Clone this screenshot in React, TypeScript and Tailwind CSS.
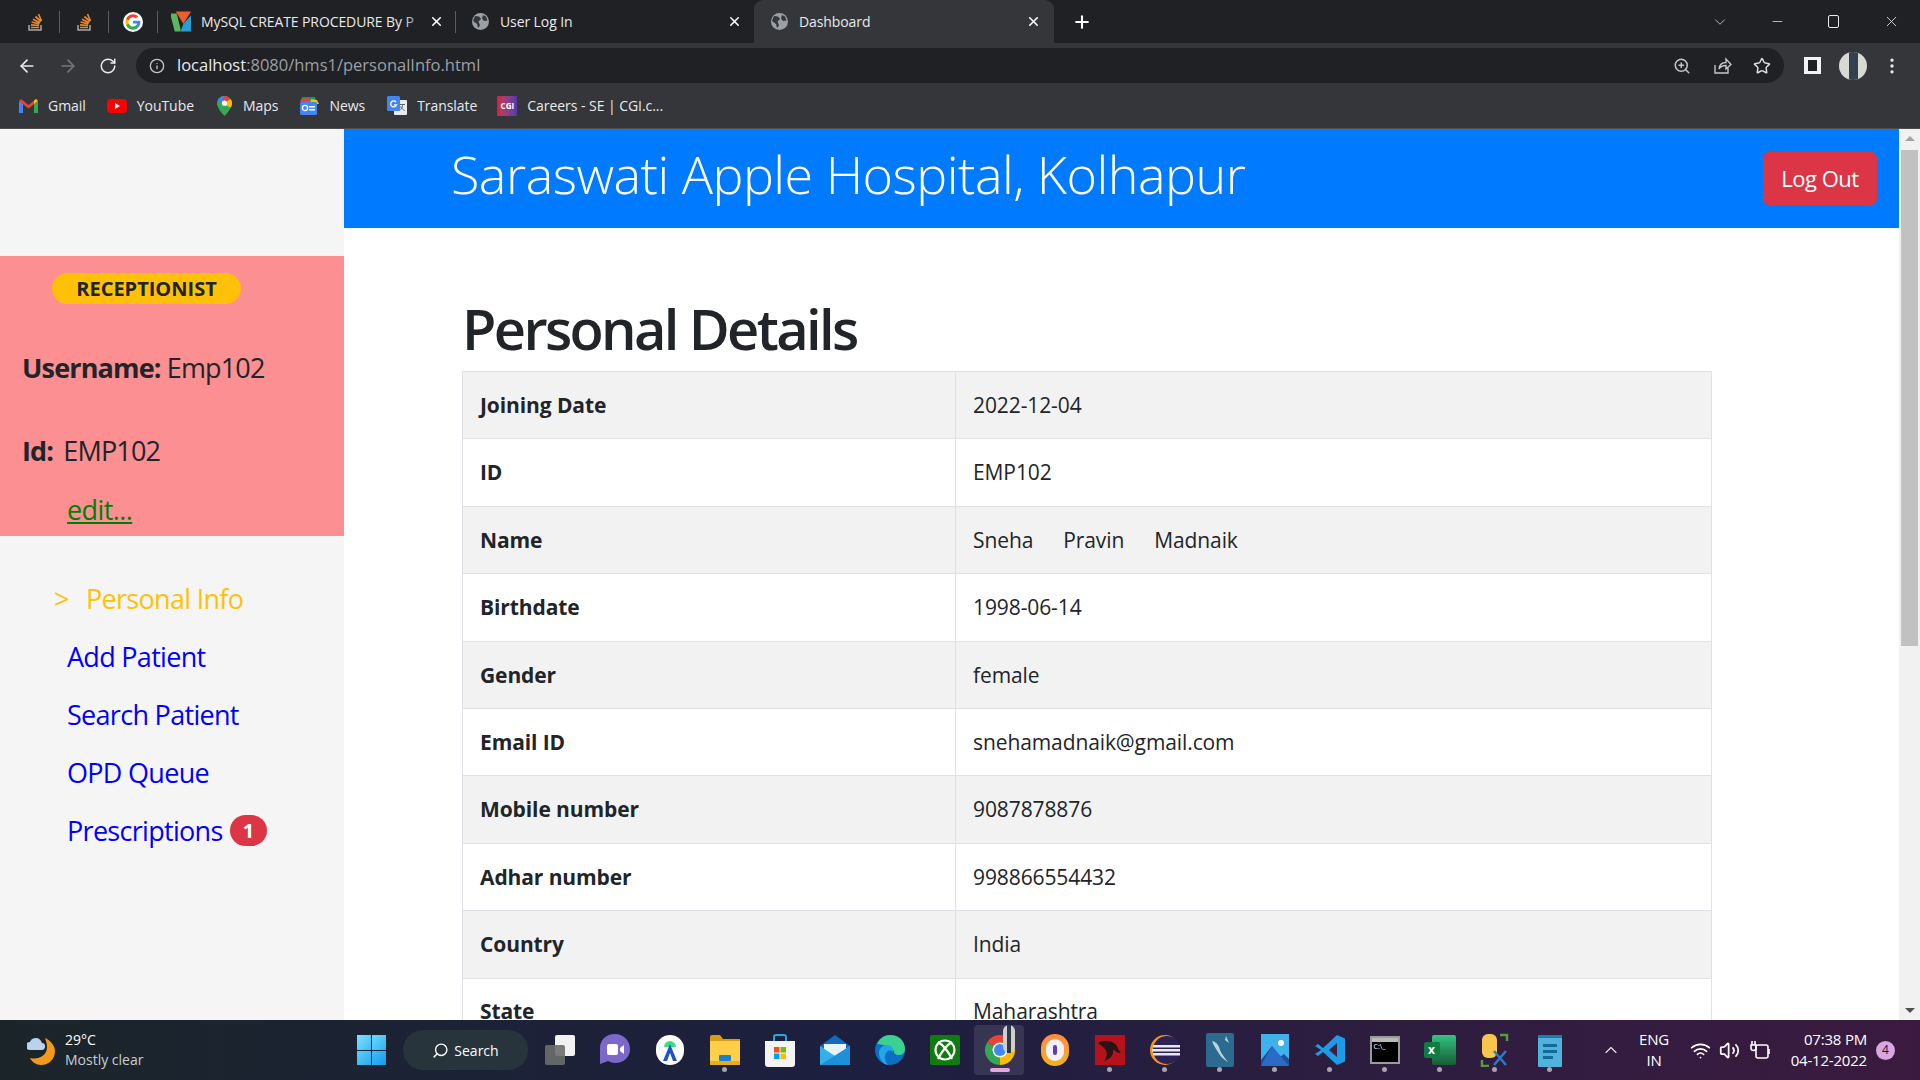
import {
  ArrowLeft,
  ArrowRight,
  ChevronDown,
  ChevronUp,
  Info,
  Minus,
  MoreVertical,
  Plus,
  RotateCw,
  Search,
  Star,
  Volume2,
  Wifi,
  X,
  ZoomIn,
} from "lucide-react";

const rows = [
  ["Joining Date", "2022-12-04"],
  ["ID", "EMP102"],
  ["Name", "Sneha|Pravin|Madnaik"],
  ["Birthdate", "1998-06-14"],
  ["Gender", "female"],
  ["Email ID", "snehamadnaik@gmail.com"],
  ["Mobile number", "9087878876"],
  ["Adhar number", "998866554432"],
  ["Country", "India"],
  ["State", "Maharashtra"],
];

function StackIcon() {
  return (
    <svg width="18" height="20" viewBox="0 0 18 20" fill="none">
      <path d="M3 13v5h12v-5" stroke="#a8a8a8" strokeWidth="1.5" />
      <path d="M5 15.5h8M5 12.8l8 .7M5.6 10l7.8 1.8M7 7.2l7 3.6M9.4 4.5l5.6 5M12.5 2l3 7" stroke="#e8872c" strokeWidth="1.7" />
    </svg>
  );
}

function GoogleIcon() {
  return (
    <div className="flex h-[20px] w-[20px] items-center justify-center rounded-full bg-white">
      <svg width="16" height="16" viewBox="0 0 24 24">
        <path fill="#4285F4" d="M23 12.3c0-.8-.1-1.600-.2-2.300H12v4.400h6.200c-.3 1.400-1.100 2.600-2.300 3.400v2.800h3.700c2.100-2 3.400-4.900 3.400-8.300z" />
        <path fill="#34A853" d="M12 23.500c3.100 0 5.700-1 7.600-2.800l-3.700-2.900c-1 .7-2.300 1.100-3.900 1.100-3 0-5.500-2-6.400-4.700H1.800v2.900c1.900 3.800 5.800 6.400 10.200 6.400z" />
        <path fill="#FBBC05" d="M5.600 14.200c-.5-1.400-.5-3 0-4.400V6.900H1.800c-1.600 3.200-1.600 7 0 10.200l3.800-2.900z" />
        <path fill="#EA4335" d="M12 5c1.700 0 3.200.6 4.400 1.700l3.300-3.300C17.700 1.600 15.100.5 12 .5 7.600.5 3.700 3.100 1.800 6.900l3.800 2.900C6.500 7 9 5 12 5z" />
      </svg>
    </div>
  );
}

function MysqlTutorialIcon() {
  return (
    <svg width="21" height="21" viewBox="0 0 21 21">
      <path d="M0 2h6l4 16v3H4L0 6z" fill="#5cb85c" />
      <path d="M5 0h16l-8 13z" fill="#f15a29" />
      <path d="M13 13l8-9v17H10z" fill="#2a9fd6" />
    </svg>
  );
}

function GlobeIcon() {
  return (
    <svg width="17" height="17" viewBox="0 0 17 17">
      <circle cx="8.500" cy="8.500" r="8.500" fill="#9aa0a6" />
      <path d="M3 3l4 .5L9 6 6.500 8.500l1.500 4-2 2.500-1-4L1 8zM11 2l3 1.500 1.500 4L12 8l-2-2.500z" fill="#35363a" />
    </svg>
  );
}

function Tab({ icon, title, width, close, fade }: { icon: React.ReactNode; title: string; width: string; close: string; fade?: boolean }) {
  return (
    <div className={`flex h-full items-center ${width}`}>
      <div className="flex w-[20px] shrink-0 justify-center">{icon}</div>
      <span className="relative ml-[10px] min-w-0 flex-1 overflow-hidden whitespace-nowrap text-[14px] tracking-[-0.1px] text-[#e8eaed]">
        {title}
        {fade && <span className="absolute inset-y-0 right-0 w-[26px] bg-gradient-to-r from-transparent to-[#202124]" />}
      </span>
      <X className={`shrink-0 text-white ${close}`} size={15} strokeWidth={2.5} />
    </div>
  );
}

function TabStrip() {
  return (
    <div className="flex h-[43px] items-center bg-[#202124]">
      <div className="ml-[26px] flex w-[18px] justify-center"><StackIcon /></div>
      <div className="ml-[15px] h-[22px] w-px bg-[#5a5c60]" />
      <div className="ml-[15px] flex w-[18px] justify-center"><StackIcon /></div>
      <div className="ml-[15px] h-[22px] w-px bg-[#5a5c60]" />
      <div className="ml-[14px] flex w-[20px] justify-center"><GoogleIcon /></div>
      <div className="ml-[14px] h-[22px] w-px bg-[#5a5c60]" />
      <div className="ml-[13px]">
        <Tab icon={<MysqlTutorialIcon />} title="MySQL CREATE PROCEDURE By P" width="w-[274px]" close="mr-[1px]" fade />
      </div>
      <div className="ml-[10px] h-[22px] w-px bg-[#5a5c60]" />
      <div className="ml-[14px]">
        <Tab icon={<GlobeIcon />} title="User Log In" width="w-[272px]" close="" />
      </div>
      <div className="ml-[12px] h-full self-end rounded-t-[9px] bg-[#35363a] pl-[15px] pr-[13px]">
        <Tab icon={<GlobeIcon />} title="Dashboard" width="w-[272px]" close="" />
      </div>
      <Plus className="ml-[18px] text-white" size={20} strokeWidth={2.5} />
      <ChevronDown className="ml-[619px] text-[#bdc1c6]" size={18} strokeWidth={1.2} />
      <Minus className="ml-[41px] text-[#e8eaed]" size={15} strokeWidth={1.2} />
      <div className="relative ml-[43px] h-[13px] w-[11px] rounded-[2px] border border-[#e8eaed]" />
      <X className="ml-[44px] text-[#e8eaed]" size={17} strokeWidth={1.2} />
    </div>
  );
}

function Toolbar() {
  return (
    <div className="flex h-[42px] items-center bg-[#35363a] pt-[3px]">
      <ArrowLeft className="ml-[17px] text-[#e8eaed]" size={20} />
      <ArrowRight className="ml-[21px] text-[#74777b]" size={20} />
      <RotateCw className="ml-[21px] text-[#e8eaed]" size={18} />
      <div className="ml-[19px] flex h-[35px] w-[1648px] items-center rounded-full bg-[#202124]">
        <Info className="ml-[13px] text-[#c4c7c5]" size={16} />
        <span className="ml-[12px] text-[16.5px] text-[#e8eaed]">localhost<span className="text-[#9aa0a6]">:8080/hms1/personalInfo.html</span></span>
        <ZoomIn className="ml-auto text-[#c4c7c5]" size={18} />
        <svg className="ml-[22px]" width="19" height="19" viewBox="0 0 19 19" fill="none" stroke="#c4c7c5" strokeWidth="1.400">
          <path d="M2 9v8h13v-5M6 13c.5-4 3-6.500 7-6.500V3l5 5.500-5 4.500V9.500c-3 0-5.500 1-7 3.500z" />
        </svg>
        <Star className="ml-[21px] mr-[13px] text-[#dadce0]" size={18} />
      </div>
      <div className="ml-[20px] h-[17px] w-[17px] border-[3px] border-x-[4px] border-[#f1f3f4] bg-[#202124]" />
      <div className="relative ml-[18px] h-[28px] w-[28px] overflow-hidden rounded-full bg-[#d9d9d4]">
        <div className="mx-auto h-full w-[9px] bg-[#33414e]" />
      </div>
      <MoreVertical className="ml-[15px] text-[#e8eaed]" size={20} />
    </div>
  );
}

function BookmarkIcon({ kind }: { kind: string }) {
  if (kind === "gmail") {
    return (
      <svg width="19" height="14" viewBox="0 0 19 14">
        <path d="M0 2v12h4V5z" fill="#4285f4" />
        <path d="M19 2v12h-4V5z" fill="#34a853" />
        <path d="M0 2l2-2 7.500 6L17 0l2 2-9.500 7.500z" fill="#ea4335" />
        <path d="M15 5l4-3-2-2-2 1.600z" fill="#fbbc04" />
      </svg>
    );
  }
  if (kind === "youtube") {
    return (
      <div className="flex h-[14px] w-[20px] items-center justify-center rounded-[4px] bg-[#ff0000]">
        <div className="ml-px h-0 w-0 border-y-[3px] border-l-[5px] border-y-transparent border-l-white" />
      </div>
    );
  }
  if (kind === "maps") {
    return (
      <svg width="15" height="20" viewBox="0 0 15 20">
        <path d="M7.500 0C3.400 0 0 3.300 0 7.400 0 12.500 7.500 20 7.500 20S15 12.500 15 7.400C15 3.300 11.600 0 7.500 0z" fill="#34a853" />
        <path d="M1 3.800C2.300 1.500 4.700 0 7.500 0l3 1-6 8z" fill="#4285f4" />
        <path d="M7.500 0c2.200 0 4.500 1 6 3L9 7 5.500 4z" fill="#ea4335" />
        <path d="M13.500 3c1 1.200 1.500 2.800 1.500 4.400 0 1.300-.5 2.800-1.300 4.200L6 8z" fill="#fbbc04" />
        <circle cx="7.500" cy="7.200" r="2.600" fill="#fff" />
      </svg>
    );
  }
  if (kind === "news") {
    return (
      <svg width="20" height="18" viewBox="0 0 20 18">
        <path d="M3 0h13l1 4H2z" fill="#0c9d58" />
        <path d="M2 2l8-1 2 4H1z" fill="#ea4335" />
        <path d="M12 2l6 1 2 4h-9z" fill="#fbbc04" />
        <rect x="1" y="5" width="17" height="13" rx="1.500" fill="#4285f4" />
        <rect x="10" y="9" width="6" height="1.500" fill="#fff" />
        <rect x="10" y="12" width="6" height="1.500" fill="#fff" />
        <circle cx="6" cy="11" r="2.600" fill="none" stroke="#fff" strokeWidth="1.300" />
      </svg>
    );
  }
  if (kind === "translate") {
    return (
      <svg width="20" height="20" viewBox="0 0 20 20">
        <rect x="7" y="4" width="13" height="15" rx="1" fill="#e8eaed" />
        <path d="M13 8.500h5M15.500 8v1.500c0 2-1.500 4-3.500 5M13.500 10.500c1 2 2.500 3 4 4" stroke="#5f6368" fill="none" />
        <rect x="0" y="0" width="13" height="15" rx="1.500" fill="#4285f4" />
        <path d="M9 6a3 3 0 1 0 .5 3H7" stroke="#fff" strokeWidth="1.300" fill="none" />
      </svg>
    );
  }
  return (
    <div className="flex h-[20px] w-[20px] items-center justify-center bg-gradient-to-r from-[#d81b3f] to-[#5236ab] text-[8px] font-bold text-white">CGI</div>
  );
}

function BookmarksBar() {
  const items = [
    ["gmail", "Gmail", "ml-[18px]", "w-[20px]"],
    ["youtube", "YouTube", "ml-[21px]", "w-[20px]"],
    ["maps", "Maps", "ml-[23px]", "w-[16px]"],
    ["news", "News", "ml-[21px]", "w-[20px]"],
    ["translate", "Translate", "ml-[22px]", "w-[20px]"],
    ["cgi", "Careers - SE | CGI.c...", "ml-[20px]", "w-[20px]"],
  ];
  return (
    <div className="flex h-[44px] items-center border-b border-[#4b4d51] bg-[#35363a] pb-[2px]">
      {items.map(([kind, label, margin, size]) => (
        <div key={kind} className={`flex items-center ${margin}`}>
          <div className={`flex justify-center ${size}`}><BookmarkIcon kind={kind} /></div>
          <span className="ml-[10px] text-[14px] tracking-[-0.05px] text-[#e8eaed]">{label}</span>
        </div>
      ))}
    </div>
  );
}

function Sidebar() {
  return (
    <aside className="flex w-[344px] shrink-0 flex-col bg-[#f5f5f5] pt-[127px]">
      <div className="flex h-[280px] flex-col bg-[#fb8f92] text-[#212529]">
        <div className="ml-[52px] mt-[17px] flex h-[31px] w-[189px] items-center justify-center rounded-full bg-[#ffc107] text-[20px] font-bold">RECEPTIONIST</div>
        <div className="ml-[22px] mt-[45px] text-[27px] leading-[38px] tracking-[-0.85px]"><b>Username:</b> Emp102</div>
        <div className="ml-[22px] mt-[45px] text-[27px] leading-[38px] tracking-[-0.85px]"><b className="mr-[4px]">Id:</b> EMP102</div>
        <a className="ml-[67px] mt-[25px] text-[27px] leading-[30px] tracking-[-0.6px] text-[#008000] underline">edit...</a>
      </div>
      <nav className="mt-[43px] flex flex-col gap-[19px] text-[27px] leading-[39px] tracking-[-0.7px] text-[#0000ff]">
        <div className="ml-[54px] flex text-[#ffc107]"><span className="w-[32px]">&gt;</span>Personal Info</div>
        <a className="ml-[67px]">Add Patient</a>
        <a className="ml-[67px]">Search Patient</a>
        <a className="ml-[67px]">OPD Queue</a>
        <div className="ml-[67px] flex items-center">
          <a>Prescriptions</a>
          <span className="ml-[7px] flex h-[31px] w-[37px] items-center justify-center rounded-full bg-[#dc3545] text-[20px] font-bold text-white">1</span>
        </div>
      </nav>
    </aside>
  );
}

function DetailsTable() {
  return (
    <table className="w-[1250px] table-fixed border-collapse border border-[#dee2e6] text-[21px] tracking-[-0.1px] text-[#212529]">
      <tbody>
        {rows.map(([label, value], i) => (
          <tr key={label} className={i % 2 === 0 ? "h-[67.4px] bg-[#f2f2f2]" : "h-[67.4px] bg-white"}>
            <th className="w-[493px] border border-[#dee2e6] pl-[17px] pt-[1px] text-left font-bold">{label}</th>
            <td className="border border-[#dee2e6] pl-[17px] pt-[1px]">
              <div className="flex gap-[30px]">
                {value.split("|").map((part) => (
                  <span key={part}>{part}</span>
                ))}
              </div>
            </td>
          </tr>
        ))}
      </tbody>
    </table>
  );
}

function Main() {
  return (
    <main className="flex min-w-0 flex-1 flex-col overflow-hidden bg-white">
      <header className="flex h-[99px] shrink-0 items-center bg-[#007bff] pl-[107px] pr-[22px]">
        <h1 className="pb-[9px] text-[52px] font-light tracking-[-0.5px] text-white">Saraswati Apple Hospital, Kolhapur</h1>
        <button className="ml-auto h-[53px] w-[114px] rounded-[6px] bg-[#dc3545] text-[22px] tracking-[-0.5px] text-white">Log Out</button>
      </header>
      <div className="pl-[118px] pt-[61px]">
        <h2 className="mb-[3px] text-[56px] font-semibold leading-[79px] tracking-[-2.65px] text-[#212529]">Personal Details</h2>
        <DetailsTable />
      </div>
    </main>
  );
}

function Scrollbar() {
  return (
    <div className="flex w-[21px] shrink-0 flex-col items-center bg-[#f1f1f1]">
      <div className="mt-[7px] h-0 w-0 border-x-[5px] border-b-[5px] border-x-transparent border-b-[#a3a3a3]" />
      <div className="mt-[9px] h-[496px] w-[17px] bg-[#c1c1c1]" />
      <div className="mb-[7px] mt-auto h-0 w-0 border-x-[5px] border-t-[5px] border-x-transparent border-t-[#505050]" />
    </div>
  );
}

function TaskIcon({ kind }: { kind: string }) {
  switch (kind) {
    case "view":
      return (
        <div className="relative h-[30px] w-[30px]">
          <div className="absolute right-0 top-0 h-[21px] w-[20px] rounded-[2px] bg-[#f2f2f2]" />
          <div className="absolute bottom-0 left-0 h-[20px] w-[20px] rounded-[2px] bg-[#6d6d6d] opacity-90" />
        </div>
      );
    case "chat":
      return (
        <svg width="30" height="32" viewBox="0 0 30 32">
          <path d="M15 0C6 0 0 6 0 14v16l8-3c2 1 5 2 7 2 9 0 15-6 15-14S24 0 15 0z" fill="#7b68c8" />
          <rect x="7" y="10" width="11" height="11" rx="2" fill="#fff" />
          <path d="M20 14l4-3v9l-4-3z" fill="#fff" />
        </svg>
      );
    case "android":
      return (
        <div className="flex h-[30px] w-[28px] items-center justify-center rounded-full bg-white">
          <svg width="18" height="22" viewBox="0 0 18 22">
            <path d="M3 8a6 6 0 0 1 12 0z" fill="#3ddc84" />
            <path d="M9 5L2 22h4l3-8 3 8h4z" fill="#1a56c4" />
          </svg>
        </div>
      );
    case "folder":
      return (
        <svg width="30" height="30" viewBox="0 0 30 30">
          <path d="M0 2a2 2 0 0 1 2-2h8l3 4h17v4H0z" fill="#d89b16" />
          <path d="M0 6h30v22a2 2 0 0 1-2 2H2a2 2 0 0 1-2-2z" fill="#ffcf48" />
          <rect x="9" y="20" width="12" height="6" rx="1" fill="#1b80d0" />
          <rect x="0" y="26" width="30" height="4" fill="#e5ac22" />
        </svg>
      );
    case "store":
      return (
        <svg width="30" height="33" viewBox="0 0 30 33">
          <path d="M9 7V3a2 2 0 0 1 2-2h8a2 2 0 0 1 2 2v4" fill="none" stroke="#22a7e0" strokeWidth="2" />
          <path d="M0 7h30v23a3 3 0 0 1-3 3H3a3 3 0 0 1-3-3z" fill="#f4f4f4" />
          <rect x="9" y="13" width="5.500" height="5.500" fill="#f25022" />
          <rect x="15.500" y="13" width="5.500" height="5.500" fill="#7fba00" />
          <rect x="9" y="19.500" width="5.500" height="5.500" fill="#00a4ef" />
          <rect x="15.500" y="19.500" width="5.500" height="5.500" fill="#ffb900" />
        </svg>
      );
    case "mail":
      return (
        <svg width="30" height="30" viewBox="0 0 30 30">
          <path d="M15 0l15 11v19H0V11z" fill="#0f6cbd" />
          <path d="M4 9h22v13l-11 6-11-6z" fill="#e8f4fc" />
          <path d="M0 11l15 10 15-10v19H0z" fill="#35b0ee" />
          <path d="M0 30l30-19v19z" fill="#1e90d8" />
        </svg>
      );
    case "edge":
      return (
        <svg width="30" height="30" viewBox="0 0 30 30">
          <circle cx="15" cy="15" r="15" fill="#0c6fc2" />
          <path d="M2 9C5 3 10 0 15 0c9 0 15 6 15 14 0 4-3 6-6 6-4 0-5-2-5-4-2-5-14-7-17-7z" fill="#3bd18f" />
          <path d="M13 30c-6-1-9-7-9-12 0-5 4-8 8-8 5 0 7 4 6 7-1-1-3-2-5-1-4 2-4 10 0 14z" fill="#1fa7e6" />
        </svg>
      );
    case "xbox":
      return (
        <div className="flex h-[30px] w-[30px] items-center justify-center rounded-[2px] bg-[#107c10]">
          <svg width="22" height="22" viewBox="0 0 22 22" fill="none" stroke="#fff" strokeWidth="2.200">
            <circle cx="11" cy="11" r="9.500" />
            <path d="M4 3c5 3 10 9 14 17M18 3C13 6 8 12 4 20" />
          </svg>
        </div>
      );
    case "chrome":
      return (
        <div className="relative h-[32px] w-[32px]">
          <svg width="32" height="32" viewBox="0 0 32 32">
            <path d="M16 16L3 8.500A15 15 0 0 1 29 8.500z" fill="#ea4335" />
            <path d="M16 16L3 8.500A15 15 0 0 0 16 31z" fill="#34a853" />
            <path d="M16 16l13-7.500A15 15 0 0 1 16 31z" fill="#fbbc04" />
            <circle cx="16" cy="16" r="7.500" fill="#fff" />
            <circle cx="16" cy="16" r="6" fill="#4285f4" />
          </svg>
          <div className="absolute -top-[9px] right-[1px] h-[28px] w-[12px] rounded-full bg-[#cfcfcf]">
            <div className="mx-auto h-full w-[4px] bg-[#2b3a45]" />
          </div>
        </div>
      );
    case "avast":
      return (
        <div className="flex h-[32px] w-[28px] items-center justify-center rounded-full bg-gradient-to-b from-[#ff8a3d] to-[#f5b21b]">
          <div className="flex h-[22px] w-[18px] items-center justify-center rounded-full bg-[#f3f0fa]">
            <div className="h-[10px] w-[4px] rounded-full bg-[#5a3fb0]" />
          </div>
        </div>
      );
    case "kali":
      return (
        <svg width="30" height="30" viewBox="0 0 30 30">
          <rect width="30" height="30" fill="#b5121b" />
          <path d="M3 8c6-3 12-3 17 1 3 2 3 6 6 9-4 0-6-2-8-4 1 5-2 10-9 12 3-4 4-8 1-12-2-3-5-4-7-6z" fill="#2a1316" />
        </svg>
      );
    case "eclipse":
      return (
        <svg width="30" height="32" viewBox="0 0 30 32">
          <circle cx="15" cy="16" r="15" fill="#f7941e" />
          <circle cx="17" cy="16" r="14" fill="#2c2255" />
          <rect x="3" y="11" width="27" height="2.500" fill="#e8e8f0" />
          <rect x="2" y="15" width="28" height="2.500" fill="#e8e8f0" />
          <rect x="3" y="19" width="27" height="2.500" fill="#e8e8f0" />
        </svg>
      );
    case "workbench":
      return (
        <svg width="28" height="34" viewBox="0 0 28 34">
          <rect width="28" height="34" rx="2" fill="#2c6b8f" />
          <path d="M6 8c5 1 7 5 8 9 1 3 4 7 8 12-5-3-8-6-10-10-2-3-4-6-6-11zM20 3l3 7-4-3z" fill="#b8d4e3" />
        </svg>
      );
    case "photos":
      return (
        <svg width="28" height="32" viewBox="0 0 28 32">
          <rect width="28" height="32" fill="#3fb2ec" />
          <circle cx="20" cy="9" r="3" fill="#fff" />
          <path d="M0 26L11 12l8 11 4-3 5 5v7H0z" fill="#1f4f9c" />
          <path d="M11 12l17 20H0z" fill="#2a6cc5" />
        </svg>
      );
    case "vscode":
      return (
        <svg width="30" height="30" viewBox="0 0 30 30">
          <path d="M22 0l8 3.500v23L22 30 8 17l-5 4-3-2 6-4-6-4 3-2 5 4z" fill="#1c9be6" />
          <path d="M22 8l-8 7 8 7z" fill="#3c2045" />
        </svg>
      );
    case "terminal":
      return (
        <div className="h-[28px] w-[30px] border-[2px] border-[#9a9a9a] bg-black">
          <div className="h-[4px] w-full bg-[#b9b9b9]" />
          <span className="block pl-[2px] text-[7px] leading-[9px] text-white">C:\_</span>
        </div>
      );
    case "excel":
      return (
        <div className="relative h-[30px] w-[32px]">
          <div className="absolute right-0 top-0 h-[30px] w-[24px] rounded-[2px] bg-gradient-to-b from-[#33c481] to-[#185c37]" />
          <div className="absolute left-0 top-[7px] flex h-[16px] w-[16px] items-center justify-center rounded-[2px] bg-[#107c41] text-[12px] font-bold text-white">x</div>
        </div>
      );
    case "tools":
      return (
        <svg width="30" height="34" viewBox="0 0 30 34" fill="none">
          <rect x="2" y="1" width="15" height="24" rx="6" fill="#f7c64a" />
          <path d="M20 2h7v6M2 27v6h7" stroke="#5a9a3c" strokeWidth="2.500" />
          <path d="M14 32l12-14M26 32L14 18" stroke="#2d78c8" strokeWidth="2.500" />
        </svg>
      );
    default:
      return (
        <svg width="24" height="34" viewBox="0 0 24 34">
          <rect y="2" width="24" height="32" rx="1" fill="#4fb3dc" />
          <path d="M0 2h24v3H0z" fill="#1a7ea8" />
          <rect x="5" y="11" width="14" height="3" fill="#156a95" />
          <rect x="5" y="17" width="14" height="3" fill="#156a95" />
          <rect x="5" y="23" width="10" height="3" fill="#156a95" />
        </svg>
      );
  }
}

const taskItems = [
  { kind: "view", dot: false },
  { kind: "chat", dot: false },
  { kind: "android", dot: false },
  { kind: "folder", dot: true },
  { kind: "store", dot: false },
  { kind: "mail", dot: false },
  { kind: "edge", dot: false },
  { kind: "xbox", dot: false },
  { kind: "chrome", dot: true },
  { kind: "avast", dot: false },
  { kind: "kali", dot: true },
  { kind: "eclipse", dot: true },
  { kind: "workbench", dot: true },
  { kind: "photos", dot: true },
  { kind: "vscode", dot: true },
  { kind: "terminal", dot: true },
  { kind: "excel", dot: true },
  { kind: "tools", dot: true },
  { kind: "notepad", dot: true },
];

function Taskbar() {
  return (
    <div className="flex h-[60px] shrink-0 items-center bg-gradient-to-r from-[#1b2529] via-[#1d1f40] via-45% to-[#3b1a3f] text-white">
      <svg className="ml-[27px]" width="28" height="30" viewBox="0 0 28 30">
        <path d="M18 3c7 3 10 9 10 13 0 8-6 14-14 14-5 0-9-3-11-7 8 2 17-2 17-11 0-3-1-6-2-9z" fill="#f39a1c" />
        <path d="M3 15a4 4 0 0 1 0-8c1-3 3-4 6-4s5 2 6 5a3.500 3.500 0 0 1-1 7z" fill="#b9d3ef" />
      </svg>
      <div className="ml-[10px] w-[292px] text-[14px] leading-[20px]">
        <div>29°C</div>
        <div className="text-[#c9cdd0]">Mostly clear</div>
      </div>
      <div className="grid h-[30px] w-[29px] grid-cols-2 gap-[1px]">
        <div className="bg-gradient-to-br from-[#7fe0ff] to-[#36bdf5]" />
        <div className="bg-gradient-to-br from-[#6adaff] to-[#2db1f0]" />
        <div className="bg-gradient-to-br from-[#5cd0fb] to-[#26aaf0]" />
        <div className="bg-gradient-to-br from-[#3cc0f8] to-[#1a98ec]" />
      </div>
      <div className="ml-[17px] flex h-[40px] w-[125px] items-center justify-center rounded-full bg-[#27343b]">
        <Search className="-scale-x-100 text-white" size={17} />
        <span className="ml-[5px] text-[14px]">Search</span>
      </div>
      <div className="ml-[4px] flex">
        {taskItems.map((item) => (
          <div key={item.kind} className="relative flex h-[50px] w-[55px] items-center justify-center">
            {item.kind === "chrome" && <div className="absolute left-[2px] h-full w-[50px] rounded-[4px] bg-white/10" />}
            <div className="relative"><TaskIcon kind={item.kind} /></div>
            {item.dot && (
              <div className={item.kind === "chrome" ? "absolute bottom-[3px] h-[4px] w-[20px] rounded-full bg-[#e3a8e0]" : "absolute bottom-[3px] h-[5px] w-[5px] rounded-full bg-[#a9a3ad]"} />
            )}
          </div>
        ))}
      </div>
      <ChevronUp className="ml-[24px] text-[#e6e6e6]" size={20} strokeWidth={1.4} />
      <div className="ml-[15px] w-[36px] text-center text-[15px] leading-[21px] tracking-[-0.2px]">
        <div>ENG</div>
        <div>IN</div>
      </div>
      <Wifi className="ml-[18px] text-white" size={21} />
      <Volume2 className="ml-[8px] text-white" size={21} />
      <svg className="ml-[9px]" width="22" height="22" viewBox="0 0 22 22" fill="none" stroke="#fff" strokeWidth="1.600">
        <rect x="7" y="6" width="12" height="13" rx="2" />
        <path d="M20 10v5M3 2v4M6 2v4M2 6h5v3a2 2 0 0 1-5 0z" />
      </svg>
      <div className="ml-[4px] w-[92px] text-right text-[15px] leading-[21px] tracking-[-0.2px]">
        <div>07:38 PM</div>
        <div>04-12-2022</div>
      </div>
      <div className="ml-[9px] flex h-[19px] w-[19px] items-center justify-center rounded-full bg-[#d8a6e0] text-[12px] text-[#26102b]">4</div>
    </div>
  );
}

export default function App() {
  return (
    <div className="flex h-screen flex-col overflow-hidden bg-white font-['Open_Sans','Noto_Sans',sans-serif]">
      <TabStrip />
      <Toolbar />
      <BookmarksBar />
      <div className="flex min-h-0 flex-1">
        <Sidebar />
        <Main />
        <Scrollbar />
      </div>
      <Taskbar />
    </div>
  );
}
